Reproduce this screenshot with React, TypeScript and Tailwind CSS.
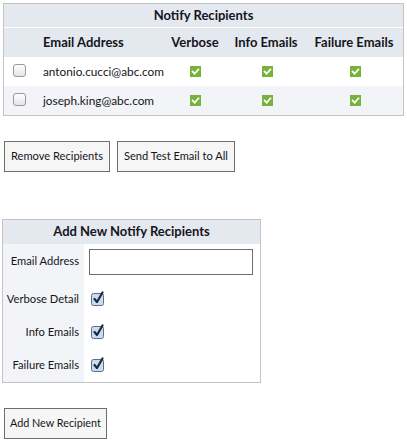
import React from "react";

const GreenCheck = () => (
  <svg width="11" height="11" viewBox="0 0 11 11" className="inline-block">
    <rect width="11" height="11" fill="#76b23c" />
    <path d="M2.6 5.6 L4.6 7.6 L8.4 3.4" stroke="#ffffff" strokeWidth="1.8" fill="none" strokeLinecap="square" />
  </svg>
);

const RowBox = () => (
  <span className="inline-block w-[13px] h-[13px] rounded-[3px] border border-[#9a9a9a] bg-gradient-to-b from-[#ffffff] to-[#e4e4e4]" />
);

const BlueCheck = () => (
  <svg width="15" height="15" viewBox="0 0 15 15" className="block">
    <rect x="0.5" y="2.5" width="12" height="12" rx="2" fill="#c9dcf2" stroke="#5b6f88" />
    <path d="M3.5 8 L6 11 L11.5 1.5" stroke="#1e2a3a" strokeWidth="2.2" fill="none" strokeLinecap="round" strokeLinejoin="round" />
  </svg>
);

const recipients = ["antonio.cucci@abc.com", "joseph.king@abc.com"];

export default function App() {
  return (
    <div className="w-[407px] h-[441px] bg-white text-[#151520] text-[11px] font-['Lato','Open_Sans',sans-serif] pt-[3px] whitespace-nowrap">
      <div className="ml-[3px] w-[401px] border border-[#c4c4c4]">
        <div className="h-[24px] bg-[#e4e8ef] flex items-center justify-center font-bold text-[13px] border-b border-white">
          Notify Recipients
        </div>
        <div className="grid grid-cols-[32px_127px_64px_78px_1fr] h-[29px] bg-[#e4e8ef] items-center font-bold text-[13px]">
          <div />
          <div className="pl-[7px]">Email Address</div>
          <div className="text-center">Verbose</div>
          <div className="text-center">Info Emails</div>
          <div className="text-center">Failure Emails</div>
        </div>
        {recipients.map((r, i) => (
          <div
            key={r}
            className={`grid grid-cols-[32px_127px_64px_78px_1fr] h-[29px] items-center ${i === 1 ? "bg-[#f3f4f8]" : "bg-white"}`}
          >
            <div className="pl-[9px] flex items-center pb-[2px]">
              <RowBox />
            </div>
            <div className="pl-[7px] text-[11.8px]">{r}</div>
            <div className="flex justify-center pl-[1px]"><GreenCheck /></div>
            <div className="flex justify-center pl-[2px]"><GreenCheck /></div>
            <div className="flex justify-center pl-[2px]"><GreenCheck /></div>
          </div>
        ))}
      </div>

      <div className="flex gap-[7px] ml-[4px] mt-[25px]">
        <button className="h-[31px] px-[6px] border border-[#6e6e6e] bg-[#f6f6f6] text-[11.1px]">Remove Recipients</button>
        <button className="h-[31px] px-[6px] border border-[#6e6e6e] bg-[#f6f6f6] text-[11.1px]">Send Test Email to All</button>
      </div>

      <div className="ml-[2px] mt-[47px] w-[259px] border border-[#c4c4c4]">
        <div className="h-[24px] bg-[#e4e8ef] flex items-center justify-center font-bold text-[13px]">
          Add New Notify Recipients
        </div>
        <div className="grid grid-cols-[81px_1fr] text-[11.2px]">
          <div className="bg-[#f3f4f8] h-[39px] flex justify-end items-start pt-[9px] pr-[5px]">Email Address</div>
          <div className="h-[39px] pl-[5px] pt-[5px]">
            <input className="w-[164px] h-[26px] border border-[#6e6e6e] bg-white" />
          </div>
          {["Verbose Detail", "Info Emails", "Failure Emails"].map((l) => (
            <React.Fragment key={l}>
              <div className="bg-[#f3f4f8] h-[33px] flex justify-end items-center pr-[5px]">{l}</div>
              <div className="h-[33px] pl-[7px] flex items-center pb-[2px]">
                <BlueCheck />
              </div>
            </React.Fragment>
          ))}
        </div>
      </div>

      <div className="ml-[4px] mt-[25px]">
        <button className="h-[31px] px-[5px] border border-[#6e6e6e] bg-[#f6f6f6] text-[10.8px]">Add New Recipient</button>
      </div>
    </div>
  );
}
